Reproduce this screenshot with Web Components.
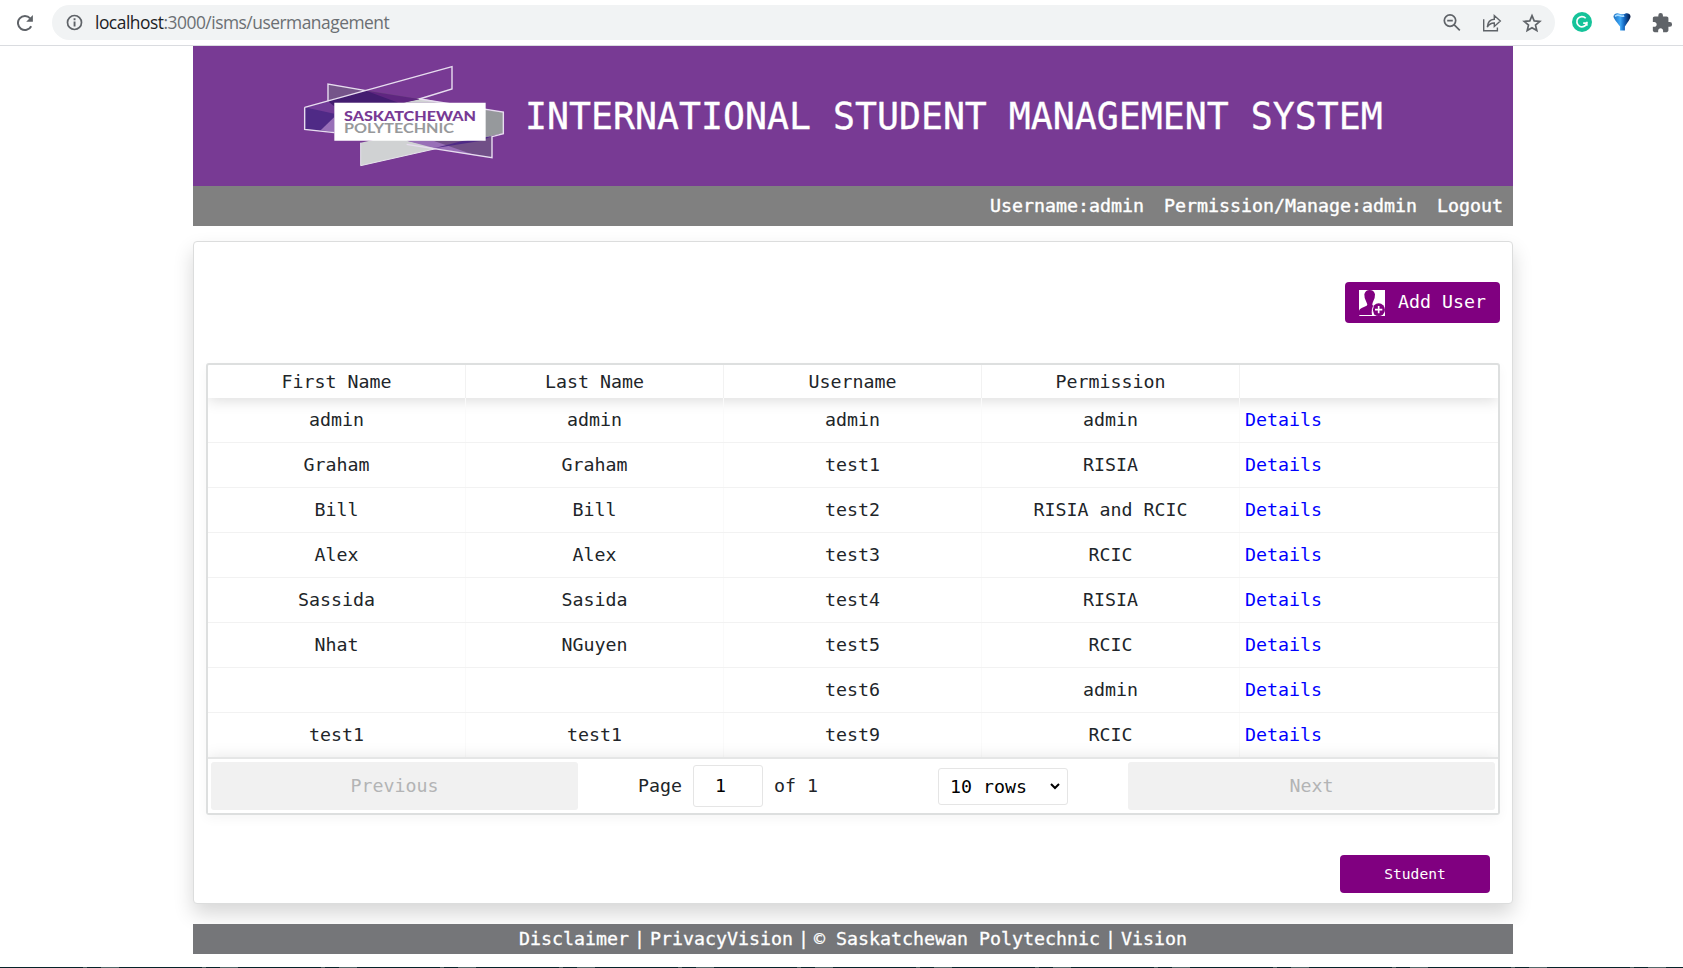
<!DOCTYPE html>
<html lang="en">
<head>
<meta charset="utf-8">
<title>User Management</title>
<style>
html,body{margin:0;height:100%;overflow:hidden;background:#fff}
body{font-family:"DejaVu Sans Mono","Liberation Mono",monospace;font-size:18.27px;color:#212529}
</style>
</head>
<body>
<isms-app></isms-app>
<script>
const define = (name, html) => customElements.define(name, class extends HTMLElement {
  constructor() {
    super();
    this.attachShadow({mode: 'open'}).innerHTML = html;
  }
});

/* Browser toolbar */
define('browser-bar', `
<style>
:host{display:flex;align-items:center;height:45px;border-bottom:1px solid #dadce0;box-sizing:content-box;background:#fff}
.reload{flex:none;margin:0 18px 0 17px}
.pill{flex:none;width:1503px;height:35px;border-radius:18px;background:#f1f3f4;display:flex;align-items:center;box-sizing:border-box;padding:0 13px 0 14px}
.url{margin-left:12px;font:17.4px "Open Sans","Noto Sans",sans-serif;letter-spacing:-.49px;color:#6b6f73;white-space:nowrap;line-height:35px}
.url b{font-weight:400;color:#202124}
.icons{margin-left:auto;display:flex;gap:20px}
.ext{display:flex;gap:20px;margin-left:17px}
.ext svg:last-child{margin-left:-1px}
svg{display:block;flex:none}
</style>
<svg class="reload" width="17" height="18" viewBox="0 0 17 18"><path d="M14.2 12.2A7 7 0 1 1 13.2 4.4" fill="none" stroke="#5f6368" stroke-width="2"/><path d="M15.9 1v6.7H9.2z" fill="#5f6368"/></svg>
<div class="pill">
<svg width="17" height="17" viewBox="0 0 17 17"><circle cx="8.5" cy="8.5" r="7" fill="none" stroke="#5f6368" stroke-width="1.7"/><path d="M7.6 7.4h1.9v5H7.6zM7.6 4.3h1.9v1.9H7.6z" fill="#5f6368"/></svg>
<span class="url"><b>localhost</b>:3000/isms/usermanagement</span>
<div class="icons">
<svg width="20" height="20" viewBox="0 0 20 20" fill="none" stroke="#5f6368" stroke-width="1.7"><circle cx="8" cy="7.6" r="5.7"/><path d="M5.2 7.6h5.6M12 11.6l5.8 5.8" /></svg>
<svg width="20" height="20" viewBox="0 0 20 20" fill="none" stroke="#5f6368" stroke-width="1.4"><path d="M1.7 6.2v11.6H15.4V14.5M5.3 14C5.7 8.9 8.4 6.6 12.3 6.3V2.6L18.3 8.1 12.3 13.4V10C9.4 9.9 7.1 11.200 5.3 14z"/></svg>
<svg width="20" height="20" viewBox="0 0 20 20" fill="none" stroke="#5f6368" stroke-width="1.7"><path d="M10 2.700l2.200 5.200 5.600.5-4.300 3.700 1.300 5.500L10 14.700l-4.800 2.900 1.300-5.500L2.200 8.400l5.600-.5z"/></svg>
</div></div>
<div class="ext">
<svg width="20" height="20" viewBox="0 0 20 20"><circle cx="10" cy="10" r="10" fill="#15c39a"/><path d="M13.700 6.200A5.100 5.100 0 1 0 14.800 11.200H11.200M14.800 9.800v4" fill="none" stroke="#fff" stroke-width="1.700"/></svg>
<svg width="20" height="20" viewBox="0 0 20 20"><defs><linearGradient id="g" x1="0" x2="1"><stop offset="0" stop-color="#1c6fc0"/><stop offset=".4" stop-color="#3fa9f8"/><stop offset=".62" stop-color="#1469c4"/><stop offset="1" stop-color="#041640"/></linearGradient></defs><path d="M1.500 4.200C2 1.200 5.500.6 7.500 1.700 9 2.500 11.500 2.500 13 1.700c2-1 5-.4 5.500 2.500.2 2.300-3.300 6.800-5.600 10.300v4H8.100v-4C5.500 11 1.300 6.500 1.500 4.200z" fill="url(#g)"/><path d="M3 4.300q2.200-2 4.600-.8t4.600.4" stroke="#a8dcff" stroke-width="1.800" fill="none"/></svg>
<svg width="22" height="22" viewBox="0 0 24 24"><path fill="#5f6368" d="M20.500 11H19V7c0-1.100-.9-2-2-2h-4V3.500a2.500 2.500 0 0 0-5 0V5H4c-1.100 0-1.990.9-1.990 2v3.800H3.500c1.490 0 2.700 1.210 2.700 2.700s-1.210 2.700-2.700 2.700H2V20c0 1.100.9 2 2 2h3.800v-1.500c0-1.490 1.210-2.700 2.700-2.700s2.700 1.210 2.700 2.700V22H17c1.100 0 2-.9 2-2v-4h1.500a2.500 2.500 0 0 0 0-5z"/></svg>
</div>`);

/* Institution logo: ribbons behind a white name plate */
define('poly-logo', `
<style>
:host{display:block;width:200px;height:101px}
svg{display:block;overflow:visible}
text{font-family:Lato,"Open Sans",sans-serif}
</style>
<svg width="200" height="101" viewBox="42 47 600 303">
<path d="M212 277L440 226 606 257 212 346z" fill="#d0d2d3"/>
<path d="M212 277V346L606 257" fill="none" stroke="#e7e4ec" stroke-width="3"/>
<path d="M340 157l48-14 70 14zM560 180L640 185V248L560 265z" fill="#d0d2d3"/>
<path d="M585 178L640 186V248L585 261z" fill="#96999c"/>
<path d="M115 101L388 146 340 157H118z" fill="#6b447f"/>
<path d="M228 121L390 147 340 157 118 153z" fill="#5f2680"/>
<path d="M115 101L228 121 115 152z" fill="#75548a"/>
<path d="M117 150L228 121 325 157H133V168H117z" fill="#431d70"/>
<path d="M44 171L133 184V246L44 236z" fill="#4f2a86"/>
<path d="M44 171L114 153 133 168V190z" fill="#713b96"/>
<path d="M133 200V246L92 240z" fill="#986fb7"/>
<path d="M350 271H560L606 257V322z" fill="#704f87"/>
<path d="M350 271L430 271 560 316 440 295z" fill="#986fb7"/>
<path d="M432 294L520 271 606 257 575 271 475 287z" fill="#4f2a86"/>
<path d="M114 153V101L228 121M44 171L486 49V116L388 146 640 185V250L606 259V322L350 282M44 171V237L133 247" fill="none" stroke="#e7ddef" stroke-width="4.200"/>
<path d="M133 157H587V271H133z" fill="#fff"/>
<text x="162" y="211" font-size="42" font-weight="900" fill="#783a94" textLength="396" lengthAdjust="spacingAndGlyphs">SASKATCHEWAN</text>
<text x="162" y="248" font-size="42" font-weight="700" fill="#97999b" textLength="330" lengthAdjust="spacingAndGlyphs">POLYTECHNIC</text>
</svg>`);

define('site-header', `
<style>
:host{display:block}
.banner{height:140px;box-sizing:border-box;padding:20px 0 0 111px;background:#783a94;display:flex;gap:21px}
h1{margin:0;font-weight:400;font-size:36.540px;line-height:102px;color:#fff;white-space:pre;-webkit-text-stroke:.3px #fff}
nav{height:40px;background:#808080;display:flex;justify-content:flex-end;align-items:center;gap:20px;padding-right:10px;color:#fff;-webkit-text-stroke:.4px #fff}
nav span{line-height:40px;height:40px}
</style>
<div class="banner"><poly-logo></poly-logo><h1>INTERNATIONAL STUDENT MANAGEMENT SYSTEM</h1></div>
<nav><span>Username:admin</span><span>Permission/Manage:admin</span><span>Logout</span></nav>`);

define('action-button', `
<style>
:host{display:flex;box-sizing:border-box;align-items:center;justify-content:center;background:purple;color:#fff;border-radius:4px;white-space:nowrap}
</style><slot name="icon"></slot><slot></slot>`);

define('add-user-icon', `
<style>:host{display:block;width:26px;height:26px;margin:3px 13px 0 0}svg{display:block}</style>
<svg width="26" height="26" viewBox="0 0 78 78"><path fill="#fff" d="M0 0h78v78H0z"/><path fill="purple" d="M0 78V62q1-5 8-8l15-7q4-3 0-9Q15 26 16 13 19 0 32 0T48 13q1 13-7 25-3 6 1 9l4 3Q35 57 39 75H2z"/><circle cx="59" cy="59" r="19" fill="purple"/><path d="M59 48v22M48 59h22" stroke="#fff" stroke-width="5"/><path d="M43 49q-6 10 0 22" stroke="#fff" stroke-width="3" fill="none"/></svg>`);

define('user-row', `
<style>
:host{display:grid;grid-template-columns:repeat(5,258px);height:45px;box-sizing:border-box;border-bottom:1px solid #f2f2f2;line-height:30px}
:host(:last-of-type){border-bottom:0}
div{box-sizing:border-box;padding:7px 5px 0;border-right:1px solid #fafafa;text-align:center;white-space:pre}
div:last-child{text-align:left;border:0;color:#00f}
</style>
<div><slot name="first"></slot></div><div><slot name="last"></slot></div><div><slot name="user"></slot></div><div><slot name="perm"></slot></div><div>Details</div>`);

define('table-head', `
<style>
:host{display:grid;grid-template-columns:repeat(5,258px);height:33px;line-height:33px;box-shadow:0 2px 15px 0 rgba(0,0,0,.15)}
::slotted(span){text-align:center;box-sizing:border-box;border-right:1px solid #f2f2f2}
::slotted(span:last-child){border:0}
</style><slot></slot>`);

define('table-pager', `
<style>
:host{display:flex;align-items:center;height:56px;box-sizing:border-box;border-top:2px solid #e5e6e6;padding:0 3px;box-shadow:0 0 15px 0 rgba(0,0,0,.1);position:relative;background:#fff}
.btn{flex:none;width:367px;height:48px;line-height:47px;border-radius:3px;background:#f1f1f1;color:#b3b4b5;text-align:center}
.mid{flex:1;display:flex;align-items:center}
.txt{padding-bottom:2px}
.page{margin-left:60px}
.box{box-sizing:border-box;border:1px solid #e5e5e5;border-radius:3px;color:#000}
.num{width:70px;height:42px;line-height:39px;margin:0 11px;padding-left:21px}
.rows{width:130px;height:37px;line-height:37px;margin-left:120px;padding:0 7px 0 11px;display:flex;align-items:center;justify-content:space-between}
</style>
<div class="btn">Previous</div>
<div class="mid"><span class="txt page">Page</span><span class="box num">1</span><span class="txt">of 1</span>
<span class="box rows">10 rows<svg width="10" height="7" viewBox="0 0 10 7"><path d="M1 1l4 4 4-4" fill="none" stroke="#000" stroke-width="2"/></svg></span></div>
<div class="btn">Next</div>`);

define('user-table', `
<style>
:host{display:block;box-sizing:border-box;width:1294px;height:452px;border:2px solid #dddfdf;border-radius:3px;box-shadow:0 4px 12px rgba(0,0,0,.04)}
.clip{height:448px;overflow:hidden}
.body{height:359px}
</style>
<div class="clip">
<table-head><span>First Name</span><span>Last Name</span><span>Username</span><span>Permission</span><span></span></table-head>
<div class="body"></div>
<table-pager></table-pager></div>`);

const USERS = [
  ['admin','admin','admin','admin'],
  ['Graham','Graham','test1','RISIA'],
  ['Bill','Bill','test2','RISIA and RCIC'],
  ['Alex','Alex','test3','RCIC'],
  ['Sassida','Sasida','test4','RISIA'],
  ['Nhat','NGuyen','test5','RCIC'],
  ['','','test6','admin'],
  ['test1','test1','test9','RCIC']
];

define('site-footer', `
<style>
:host{display:flex;justify-content:center;height:30px;line-height:30px;background:#757679;color:#fff;-webkit-text-stroke:.3px #fff;white-space:pre}
i{font-style:normal;width:21px;display:flex;justify-content:center}
</style><span>Disclaimer</span><i>|</i><span>PrivacyVision</span><i>|</i><span>© Saskatchewan Polytechnic</span><i>|</i><span>Vision</span>`);

define('isms-app', `
<style>
:host{display:flex;flex-direction:column;height:968px}
main{width:1320px;margin:0 auto 0 193px}
.card{box-sizing:border-box;margin-top:15px;height:663px;border:1px solid #dcdddd;border-radius:4px;padding:40px 12px 0;background:#fff;box-shadow:0 10px 20px rgba(0,0,0,.16)}
.add{width:155px;height:41px;margin:0 0 40px auto;padding-bottom:2px}
.student{width:150px;height:38px;margin:40px 10px 0 auto;padding-bottom:2px;font-size:14.600px}
site-footer{margin-top:20px;position:relative}
.edge{height:1px;margin-top:auto;background:repeating-linear-gradient(90deg,#062329 0 83px,#496061 83px 87px,#062329 87px 101px,#52686a 101px 119px)}
</style>
<browser-bar></browser-bar>
<main>
<site-header></site-header>
<div class="card">
<action-button class="add"><add-user-icon slot="icon"></add-user-icon>Add User</action-button>
<user-table></user-table>
<action-button class="student">Student</action-button>
</div>
<site-footer></site-footer>
</main>
<div class="edge"></div>`);

const table = document.querySelector('isms-app').shadowRoot.querySelector('user-table');
table.shadowRoot.querySelector('.body').innerHTML = USERS.map(u =>
  '<user-row>' + ['first','last','user','perm'].map((s, i) => `<span slot="${s}">${u[i]}</span>`).join('') + '</user-row>').join('');
</script>
</body>
</html>
